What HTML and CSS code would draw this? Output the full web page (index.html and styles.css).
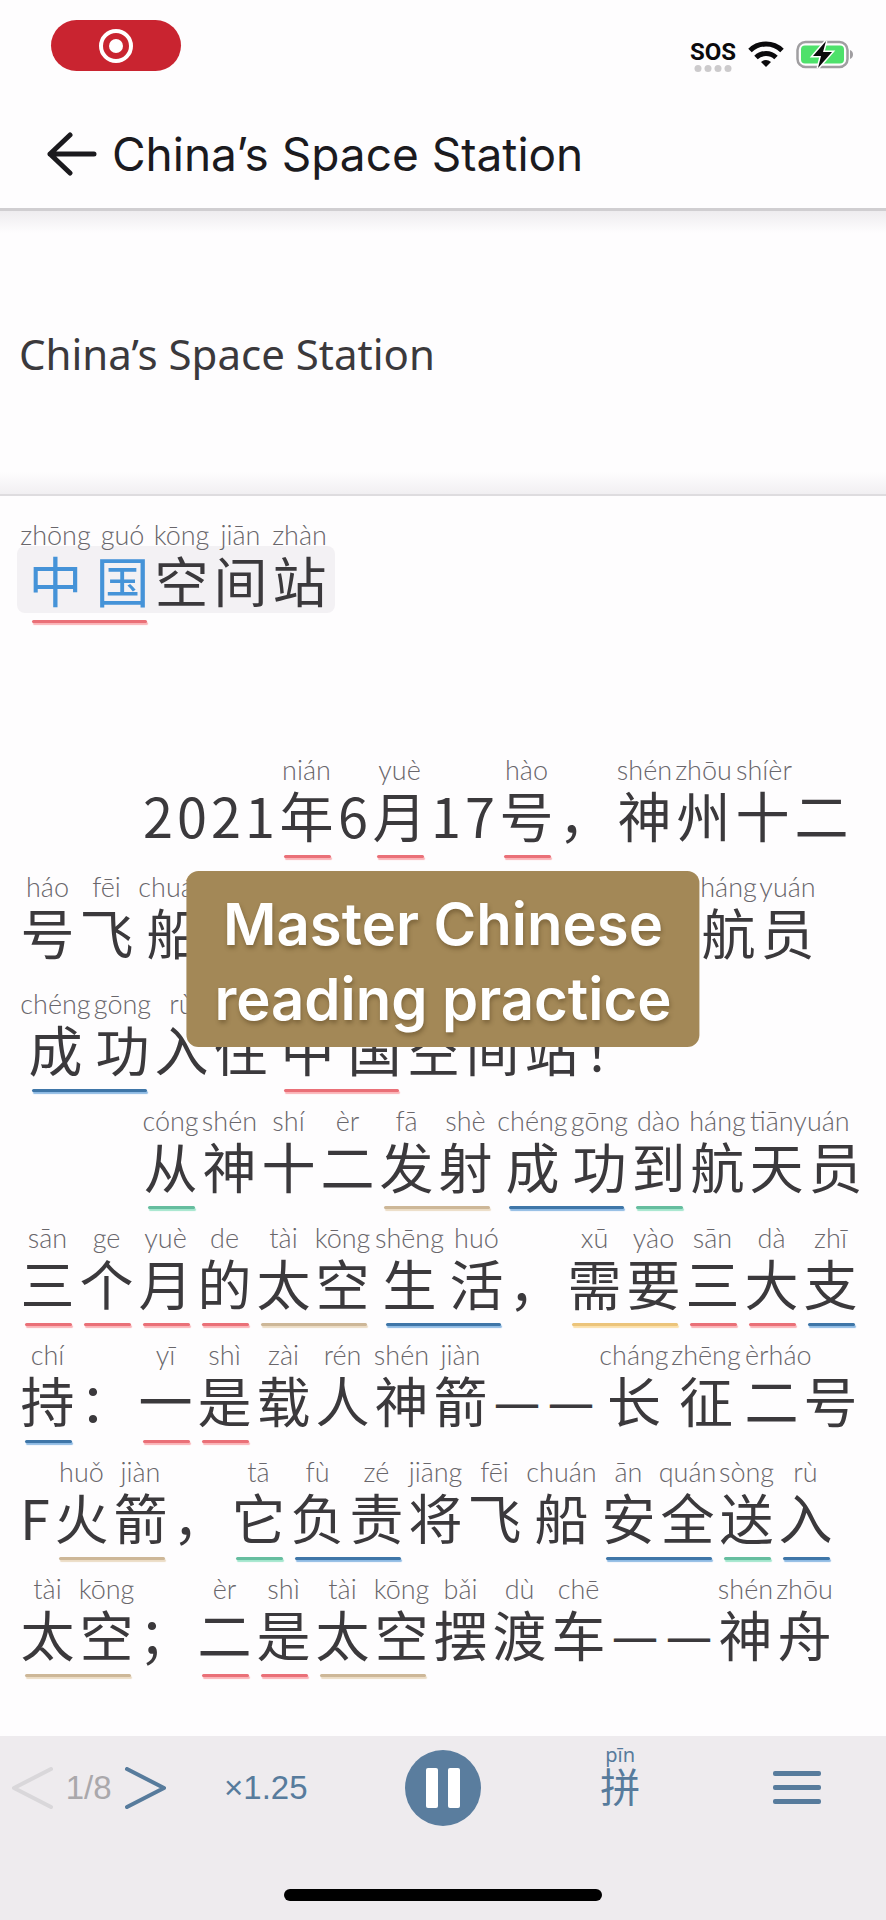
FILE: index.html
```html
<!DOCTYPE html>
<html lang="en">
<head>
    <meta charset="utf-8">
    <meta name="viewport" content="width=device-width, initial-scale=1">
    <title>China’s Space Station</title>
    <link rel="stylesheet" href="styles.css">
</head>
<body>
    <header class="header">
        <div class="status">
            <div class="record">
                <svg width="36" height="36" viewBox="0 0 36 36">
                    <circle cx="18" cy="18" r="15" fill="none" stroke="#fff" stroke-width="4"/>
                    <circle cx="18" cy="18" r="7" fill="#fff"/>
                </svg>
            </div>
            <div class="signals">
                <div class="sos">
                    <span>SOS</span>
                    <svg width="40" height="7" viewBox="0 0 40 7" fill="#cccacc">
                        <circle cx="5" cy="3.500" r="3.500"/>
                        <circle cx="15" cy="3.500" r="3.500"/>
                        <circle cx="25" cy="3.500" r="3.500"/>
                        <circle cx="35" cy="3.500" r="3.500"/>
                    </svg>
                </div>
                <svg width="36" height="28" viewBox="0 0 36 28" fill="none" stroke="#0b0a0c" stroke-width="5">
                    <path d="M2 10.500a23 23 0 0 1 32 0"/>
                    <path d="M8 17.500a14.500 14.500 0 0 1 20 0"/>
                    <path d="M18 27l-5-5a8 8 0 0 1 10 0z" fill="#0b0a0c" stroke="none"/>
                </svg>
                <svg width="58" height="30" viewBox="0 0 58 30">
                    <rect x="1.500" y="2" width="50" height="25" rx="8" fill="none" stroke="#a09ea1" stroke-width="2.500"/>
                    <rect x="5" y="5.500" width="43" height="18" rx="4" fill="#4ee16b"/>
                    <path d="M54 10v9c4-1 4-8 0-9z" fill="#a09ea1"/>
                    <path d="M30 1L17 16h8l-3 12 14-16h-9z" fill="#0b0a0c" stroke="#fff" stroke-width="3" paint-order="stroke"/>
                </svg>
            </div>
        </div>
        <div class="nav">
            <button class="back" type="button" aria-label="Back">
                <svg width="52" height="44" viewBox="0 0 52 44" fill="none" stroke="#1b1a1e" stroke-width="5" stroke-linecap="round" stroke-linejoin="round">
                    <path d="M48 22H4M24 3L4 22l20 19"/>
                </svg>
            </button>
            <h1>China’s Space Station</h1>
        </div>
    </header>

    <section class="translation">
        <p>China’s Space Station</p>
    </section>

    <main class="reader" lang="zh-CN">
        <h2 class="text title">
            <span class="word red active wide-start"><ruby class="wide">中<rt>zhōng</rt></ruby><ruby>国<rt>guó</rt></ruby></span>
            <span class="word"><ruby>空<rt>kōng</rt></ruby><ruby>间<rt>jiān</rt></ruby><ruby>站<rt>zhàn</rt></ruby></span>
        </h2>

        <p class="text">
            <span class="word indent"><b>2</b><b>0</b><b>2</b><b>1</b></span>
            <span class="word red"><ruby>年<rt>nián</rt></ruby></span>
            <span class="word"><b>6</b></span>
            <span class="word red"><ruby>月<rt>yuè</rt></ruby></span>
            <span class="word"><b>1</b><b>7</b></span>
            <span class="word red"><ruby>号<rt>hào</rt></ruby></span>
            <span class="word"><ruby>，</ruby></span>
            <span class="word"><ruby>神<rt>shén</rt></ruby><ruby>州<rt>zhōu</rt></ruby><ruby class="pair"><span>十</span><span>二</span><rt>shíèr</rt></ruby></span>
            <span class="word"><ruby>号<rt>háo</rt></ruby><ruby>飞<rt>fēi</rt></ruby><ruby class="wide">船<rt>chuán</rt></ruby></span>
            <span class="word blue wide-start"><ruby class="wide">成<rt>chéng</rt></ruby><ruby>功<rt>gōng</rt></ruby></span>
            <span class="word tan"><ruby>发<rt>fā</rt></ruby><ruby>射<rt>shè</rt></ruby></span>
            <span class="word"><ruby>，</ruby></span>
            <span class="word red"><ruby>三<rt>sān</rt></ruby></span>
            <span class="word"><ruby>名<rt>míng</rt></ruby></span>
            <span class="word"><ruby>宇<rt>yǔ</rt></ruby><ruby>航<rt>háng</rt></ruby><ruby>员<rt>yuán</rt></ruby></span>
            <span class="word blue wide-start"><ruby class="wide">成<rt>chéng</rt></ruby><ruby>功<rt>gōng</rt></ruby></span>
            <span class="word"><ruby>入<rt>rù</rt></ruby><ruby>住<rt>zhù</rt></ruby></span>
            <span class="word red wide-start"><ruby class="wide">中<rt>zhōng</rt></ruby><ruby>国<rt>guó</rt></ruby></span>
            <span class="word"><ruby>空<rt>kōng</rt></ruby><ruby>间<rt>jiān</rt></ruby><ruby>站<rt>zhàn</rt></ruby></span>
            <span class="word"><ruby>！</ruby></span>
        </p>

        <p class="text">
            <span class="word green indent"><ruby>从<rt>cóng</rt></ruby></span>
            <span class="word"><ruby>神<rt>shén</rt></ruby><ruby>十<rt>shí</rt></ruby><ruby>二<rt>èr</rt></ruby></span>
            <span class="word tan"><ruby>发<rt>fā</rt></ruby><ruby>射<rt>shè</rt></ruby></span>
            <span class="word blue wide-start"><ruby class="wide">成<rt>chéng</rt></ruby><ruby>功<rt>gōng</rt></ruby></span>
            <span class="word green"><ruby>到<rt>dào</rt></ruby></span>
            <span class="word"><ruby>航<rt>háng</rt></ruby><ruby class="pair"><span>天</span><span>员</span><rt>tiānyuán</rt></ruby></span>
            <span class="word red"><ruby>三<rt>sān</rt></ruby></span>
            <span class="word red"><ruby>个<rt>ge</rt></ruby></span>
            <span class="word red"><ruby>月<rt>yuè</rt></ruby></span>
            <span class="word red"><ruby>的<rt>de</rt></ruby></span>
            <span class="word tan"><ruby>太<rt>tài</rt></ruby><ruby>空<rt>kōng</rt></ruby></span>
            <span class="word blue wide-start"><ruby class="wide">生<rt>shēng</rt></ruby><ruby>活<rt>huó</rt></ruby></span>
            <span class="word"><ruby>，</ruby></span>
            <span class="word yellow"><ruby>需<rt>xū</rt></ruby><ruby>要<rt>yào</rt></ruby></span>
            <span class="word red"><ruby>三<rt>sān</rt></ruby></span>
            <span class="word red"><ruby>大<rt>dà</rt></ruby></span>
            <span class="word blue"><ruby>支<rt>zhī</rt></ruby></span>
            <span class="word blue"><ruby>持<rt>chí</rt></ruby></span>
            <span class="word"><ruby>：</ruby></span>
            <span class="word red"><ruby>一<rt>yī</rt></ruby></span>
            <span class="word red"><ruby>是<rt>shì</rt></ruby></span>
            <span class="word"><ruby>载<rt>zài</rt></ruby><ruby>人<rt>rén</rt></ruby></span>
            <span class="word"><ruby>神<rt>shén</rt></ruby><ruby>箭<rt>jiàn</rt></ruby></span>
            <span class="word"><i>—</i><i>—</i></span>
            <span class="word"><ruby class="mid">长<rt>cháng</rt></ruby><ruby class="mid">征<rt>zhēng</rt></ruby><ruby class="pair"><span>二</span><span>号</span><rt>èrháo</rt></ruby></span>
            <span class="word"><b>F</b></span>
            <span class="word tan"><ruby>火<rt>huǒ</rt></ruby><ruby>箭<rt>jiàn</rt></ruby></span>
            <span class="word"><ruby>，</ruby></span>
            <span class="word green"><ruby>它<rt>tā</rt></ruby></span>
            <span class="word blue"><ruby>负<rt>fù</rt></ruby><ruby>责<rt>zé</rt></ruby></span>
            <span class="word"><ruby>将<rt>jiāng</rt></ruby></span>
            <span class="word"><ruby>飞<rt>fēi</rt></ruby><ruby class="wide">船<rt>chuán</rt></ruby></span>
            <span class="word blue"><ruby>安<rt>ān</rt></ruby><ruby>全<rt>quán</rt></ruby></span>
            <span class="word green"><ruby>送<rt>sòng</rt></ruby></span>
            <span class="word blue"><ruby>入<rt>rù</rt></ruby></span>
            <span class="word tan"><ruby>太<rt>tài</rt></ruby><ruby>空<rt>kōng</rt></ruby></span>
            <span class="word"><ruby>；</ruby></span>
            <span class="word red"><ruby>二<rt>èr</rt></ruby></span>
            <span class="word red"><ruby>是<rt>shì</rt></ruby></span>
            <span class="word tan"><ruby>太<rt>tài</rt></ruby><ruby>空<rt>kōng</rt></ruby></span>
            <span class="word"><ruby>摆<rt>bǎi</rt></ruby><ruby>渡<rt>dù</rt></ruby><ruby>车<rt>chē</rt></ruby></span>
            <span class="word"><i>—</i><i>—</i></span>
            <span class="word"><ruby>神<rt>shén</rt></ruby><ruby>舟<rt>zhōu</rt></ruby></span>
        </p>

        <div class="caption" lang="en">Master Chinese<br>reading practice</div>
    </main>

    <footer class="footer">
        <div class="controls">
            <div class="pager">
                <button type="button" aria-label="Previous page" disabled>
                    <svg width="42" height="42" viewBox="0 0 42 42" fill="none" stroke="#d9d7da" stroke-width="4" stroke-linecap="round" stroke-linejoin="round"><path d="M39 2L2 21l37 19"/></svg>
                </button>
                <span>1/8</span>
                <button type="button" aria-label="Next page">
                    <svg width="42" height="42" viewBox="0 0 42 42" fill="none" stroke="#577b9c" stroke-width="4" stroke-linecap="round" stroke-linejoin="round"><path d="M3 2l37 19L3 40"/></svg>
                </button>
            </div>
            <button class="speed" type="button">×1.25</button>
            <button class="pause" type="button" aria-label="Pause">
                <svg width="76" height="76" viewBox="0 0 76 76">
                    <circle cx="38" cy="38" r="38" fill="#5a7d9e"/>
                    <rect x="21" y="18" width="12" height="40" rx="2" fill="#fff"/>
                    <rect x="43" y="18" width="12" height="40" rx="2" fill="#fff"/>
                </svg>
            </button>
            <button class="pinyin" type="button" lang="zh-CN"><small>pīn</small><span>拼</span></button>
            <button class="menu" type="button" aria-label="Menu">
                <svg width="48" height="34" viewBox="0 0 48 34" fill="#577b9c">
                    <rect width="48" height="5" rx="2"/>
                    <rect y="14" width="48" height="5" rx="2"/>
                    <rect y="28" width="48" height="5" rx="2"/>
                </svg>
            </button>
        </div>
        <div class="home-bar"></div>
    </footer>
</body>
</html>
```
FILE: styles.css
```css
* {
    box-sizing: border-box;
}

body {
    margin: 0;
    min-height: 100vh;
    display: flex;
    flex-direction: column;
    background-color: #fefdfe;
    color: #3b393c;
    font-family: "Noto Sans", "Noto Sans CJK SC", sans-serif;
}

h1, h2, p {
    margin: 0;
    font-weight: 400;
}

button {
    display: flex;
    padding: 0;
    border: none;
    background: none;
    color: #577b9c;
    font: inherit;
    cursor: pointer;
}

svg {
    display: block;
}

/* Header */
.header {
    border-bottom: 3px solid #d0ced1;
    padding-bottom: 24px;
}

.status {
    display: flex;
    justify-content: space-between;
    align-items: flex-start;
    padding: 20px 32px 0 51px;
}

.record {
    display: flex;
    justify-content: center;
    align-items: center;
    width: 130px;
    height: 51px;
    border-radius: 26px;
    background-color: #c92430;
}

.signals {
    display: flex;
    align-items: flex-start;
    gap: 12px;
    padding-top: 20px;
}

.sos {
    display: flex;
    flex-direction: column;
    align-items: center;
    gap: 1px;
    color: #0b0a0c;
    font: 700 24px/24px Roboto, sans-serif;
}

.nav {
    display: flex;
    align-items: center;
    gap: 14px;
    padding: 52px 46px 0;
}

.nav h1 {
    color: #1b1a1e;
    font: 400 46px/60px Inter, sans-serif;
}

/* Translation */
.translation {
    padding: 111px 19px 108px;
    background: linear-gradient(#eeecef, #fefdfe 22px, #fefdfe calc(100% - 22px), #f1eff2);
    border-bottom: 2px solid #dedcdf;
    font-size: 42px;
    line-height: 64px;
}

/* Reader */
.reader {
    position: relative;
    flex: 1;
    padding: 27px 18px 0;
}

.text {
    display: flex;
    flex-wrap: wrap;
    font: 400 54px/66px "Noto Sans CJK SC", sans-serif;
}

.title {
    position: relative;
    z-index: 0;
    width: fit-content;
    margin-bottom: 118px;
}

/* grey box behind the sentence being read */
.title::before {
    content: "";
    position: absolute;
    z-index: -1;
    inset: 23px -6px 27px -1px;
    border-radius: 8px;
    background-color: #f3f1f4;
}

.word {
    position: relative;
    display: flex;
    align-items: flex-end;
    padding-bottom: 27px;
}

/* level underline, laid over the gap below the characters */
.word::after {
    content: "";
    position: absolute;
    right: 5px;
    bottom: 17px;
    left: 7px;
    height: 3px;
    border-radius: 2px;
}

.wide-start::after {
    left: 14px;
}

.red::after {
    background-color: #ea7078;
    box-shadow: 1px 2px 1px #fbb4b8;
}

.blue::after {
    background-color: #3f76a8;
    box-shadow: 1px 2px 1px #8fbbe4;
}

.green::after {
    background-color: #66bd9f;
    box-shadow: 1px 2px 1px #a2e6cd;
}

.tan::after {
    background-color: #cdb798;
    box-shadow: 1px 2px 1px #ecdcc5;
}

.yellow::after {
    background-color: #ecc47a;
    box-shadow: 1px 2px 1px #fbe0ac;
}

.indent {
    margin-left: 123px;
}

ruby {
    display: flex;
    flex-direction: column-reverse;
    align-items: center;
    width: 59px;
    height: 90px;
}

.active ruby {
    color: #4593d8;
}

.mid {
    width: 72px;
}

.wide {
    width: 75px;
}

rt {
    display: block;
    height: 24px;
    color: #69666b;
    font: 300 27px/24px Lato, "Noto Sans", sans-serif;
    white-space: nowrap;
}

.active rt {
    color: #69666b;
}

/* two characters under one joined reading */
.pair {
    display: grid;
    grid-template: 24px 66px / 1fr 1fr;
    justify-items: center;
    width: 118px;
}

.pair span {
    grid-row: 2;
}

.pair rt {
    grid-area: 1 / 1 / 2 / 3;
    justify-self: start;
    padding-left: 3px;
}

b, i {
    width: 34px;
    font-weight: 400;
    font-style: normal;
    text-align: center;
}

i {
    width: 54px;
    font-family: "Noto Sans", sans-serif;
    font-size: 46px;
}

.caption {
    position: absolute;
    z-index: 1;
    top: 375px;
    left: 50%;
    transform: translateX(-50%);
    padding: 16px 28px 10px;
    border-radius: 12px;
    background-color: #a38857;
    color: #fff;
    font: 600 58px/75px Inter, sans-serif;
    text-align: center;
    text-shadow: 1px 3px 4px rgba(70, 50, 20, 0.4);
    white-space: nowrap;
}

/* Footer */
.footer {
    padding: 10px 0 19px;
    background-color: #eeebee;
}

.controls {
    display: grid;
    grid-template-columns: repeat(5, 1fr);
    align-items: center;
    justify-items: center;
    height: 84px;
    color: #577b9c;
    font: 400 33px/40px "Liberation Sans", sans-serif;
}

.pager {
    display: flex;
    align-items: center;
    gap: 12px;
    color: #aaa8ab;
}

.pinyin {
    flex-direction: column;
    align-items: center;
    padding-bottom: 24px;
    font: 400 40px/42px "Noto Sans CJK SC", sans-serif;
}

.pinyin small {
    font: 400 20px/18px "Noto Sans", sans-serif;
}

.home-bar {
    width: 36%;
    height: 12px;
    margin: 59px auto 0;
    border-radius: 6px;
    background-color: #000;
}
```
